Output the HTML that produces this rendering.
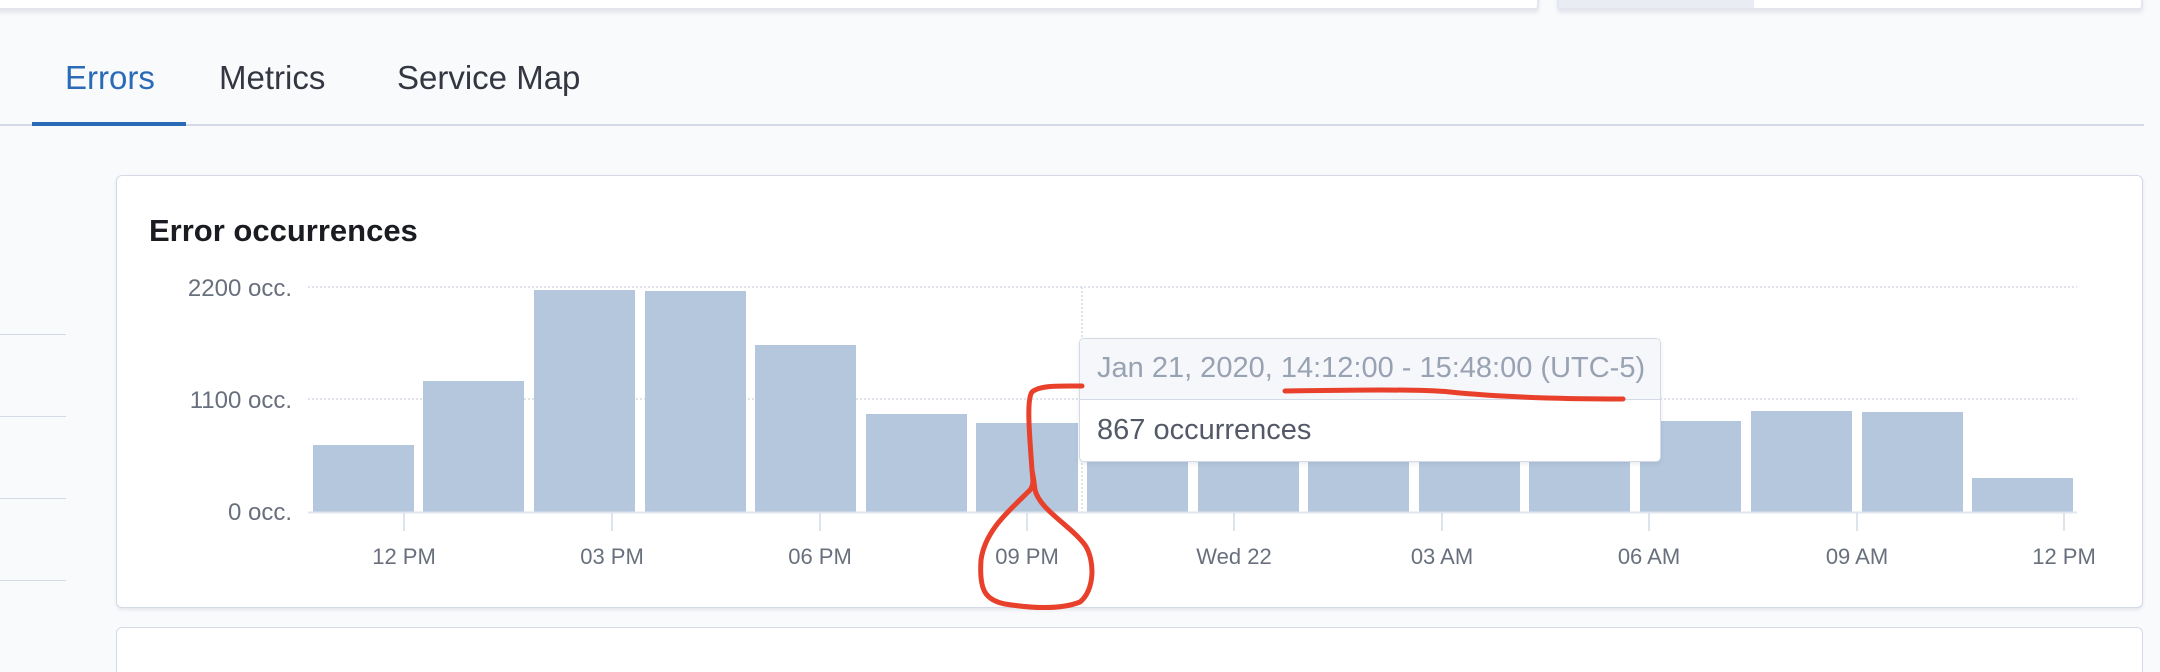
<!DOCTYPE html>
<html><head><meta charset="utf-8"><style>
*{margin:0;padding:0;box-sizing:border-box}
html,body{width:2160px;height:672px;overflow:hidden}
body{background:#f9fafc;font-family:"Liberation Sans",sans-serif;position:relative}
.abs{position:absolute}
.t{position:absolute;white-space:nowrap;line-height:1}
</style></head><body>
<div class="abs" style="left:-10px;top:-10px;width:1549px;height:20px;background:#fff;border:2px solid #e3e6ee;border-radius:4px;box-shadow:0 3px 4px rgba(80,90,120,.12)"></div>
<div class="abs" style="left:1557px;top:-10px;width:586px;height:20px;background:#fff;border:2px solid #e3e6ee;border-radius:4px;box-shadow:0 3px 4px rgba(80,90,120,.12);overflow:hidden"><div style="width:195px;height:100%;background:#e9ecf3"></div></div>
<div class="t" style="left:65px;top:61px;font-size:33px;color:#2a6bb8">Errors</div>
<div class="t" style="left:219px;top:61px;font-size:33px;color:#343741">Metrics</div>
<div class="t" style="left:397px;top:61px;font-size:33px;color:#343741">Service Map</div>
<div class="abs" style="left:0;top:124px;width:2144px;height:2px;background:#d3dae6"></div>
<div class="abs" style="left:32px;top:122px;width:154px;height:4px;background:#2a6bb8"></div>
<div class="abs" style="left:0;top:334px;width:66px;height:1px;background:#d3dae6"></div>
<div class="abs" style="left:0;top:416px;width:66px;height:1px;background:#d3dae6"></div>
<div class="abs" style="left:0;top:498px;width:66px;height:1px;background:#d3dae6"></div>
<div class="abs" style="left:0;top:580px;width:66px;height:1px;background:#d3dae6"></div>
<div class="abs" style="left:116px;top:175px;width:2027px;height:433px;background:#fff;border:1px solid #d3dae6;border-radius:6px;box-shadow:0 2px 3px rgba(80,90,120,.12)"></div>
<div class="abs" style="left:116px;top:627px;width:2027px;height:45px;background:#fff;border:1px solid #d3dae6;border-bottom:none;border-radius:6px 6px 0 0;overflow:hidden">
<div class="t" style="left:32px;top:40px;font-size:31px;font-weight:bold;color:#1a1c21">Errors</div></div>
<div class="t" style="left:149px;top:215px;font-size:31px;font-weight:bold;color:#1a1c21">Error occurrences</div>
<svg class="abs" style="left:0;top:0" width="2160" height="672">
<g font-family="Liberation Sans, sans-serif" font-size="24" fill="#69707d" text-anchor="end">
<text x="292" y="296">2200 occ.</text><text x="292" y="408">1100 occ.</text><text x="292" y="520">0 occ.</text></g>
<g stroke="#d3dae6" stroke-width="1.5" stroke-dasharray="2 2"><line x1="308" y1="287" x2="2077" y2="287"/><line x1="308" y1="399" x2="2077" y2="399"/><line x1="1082" y1="287" x2="1082" y2="512"/></g>
<g fill="#b4c7dd">
<rect x="313" y="445" width="101" height="67"/><rect x="423" y="381" width="101" height="131"/><rect x="534" y="290" width="101" height="222"/><rect x="645" y="291" width="101" height="221"/><rect x="755" y="345" width="101" height="167"/><rect x="866" y="414" width="101" height="98"/><rect x="976" y="423" width="102" height="89"/><rect x="1087" y="430" width="101" height="82"/><rect x="1198" y="428" width="101" height="84"/><rect x="1308" y="426" width="101" height="86"/><rect x="1419" y="430" width="101" height="82"/><rect x="1529" y="428" width="101" height="84"/><rect x="1640" y="421" width="101" height="91"/><rect x="1751" y="411" width="101" height="101"/><rect x="1862" y="412" width="101" height="100"/><rect x="1972" y="478" width="101" height="34"/></g>
<line x1="308" y1="512.5" x2="2077" y2="512.5" stroke="#e0e5ee" stroke-width="2"/>
<g stroke="#d3dae6" stroke-width="1.5"><line x1="404" y1="513" x2="404" y2="531"/><line x1="612" y1="513" x2="612" y2="531"/><line x1="820" y1="513" x2="820" y2="531"/><line x1="1027" y1="513" x2="1027" y2="531"/><line x1="1234" y1="513" x2="1234" y2="531"/><line x1="1442" y1="513" x2="1442" y2="531"/><line x1="1649" y1="513" x2="1649" y2="531"/><line x1="1857" y1="513" x2="1857" y2="531"/><line x1="2064" y1="513" x2="2064" y2="531"/></g>
<g font-family="Liberation Sans, sans-serif" font-size="22" fill="#69707d" text-anchor="middle">
<text x="404" y="564">12 PM</text><text x="612" y="564">03 PM</text><text x="820" y="564">06 PM</text><text x="1027" y="564">09 PM</text><text x="1234" y="564">Wed 22</text><text x="1442" y="564">03 AM</text><text x="1649" y="564">06 AM</text><text x="1857" y="564">09 AM</text><text x="2064" y="564">12 PM</text></g>
</svg>
<div class="abs" style="left:1079px;top:338px;width:582px;height:124px;background:#fff;border:1.5px solid #d3dae6;border-radius:5px;box-shadow:0 2px 4px rgba(80,90,120,.12);overflow:hidden">
<div style="height:61px;background:#f5f7fa;border-bottom:1.5px solid #d3dae6"></div></div>
<div class="t" style="left:1097px;top:354px;font-size:29px;color:#98a2b3">Jan 21, 2020, 14:12:00 - 15:48:00 (UTC-5)</div>
<div class="t" style="left:1097px;top:416px;font-size:29px;color:#535966">867 occurrences</div>
<svg class="abs" style="left:0;top:0" width="2160" height="672">
<g fill="none" stroke="#e8402a" stroke-width="5" stroke-linecap="round" stroke-linejoin="round">
<path d="M1082 386 C1060 386 1040 385 1032 392 C1026 400 1030 440 1032 470 C1033 480 1034 485 1030 490 C1010 510 985 530 981 560 C979 590 985 600 1005 604 C1030 608 1060 610 1080 602 C1095 590 1095 560 1085 545 C1070 525 1040 510 1035 490 C1034 480 1033 475 1032 470"/>
<path d="M1285 391 C1350 390 1420 389 1450 392 C1500 397 1560 399 1623 399"/>
</g></svg>
</body></html>
